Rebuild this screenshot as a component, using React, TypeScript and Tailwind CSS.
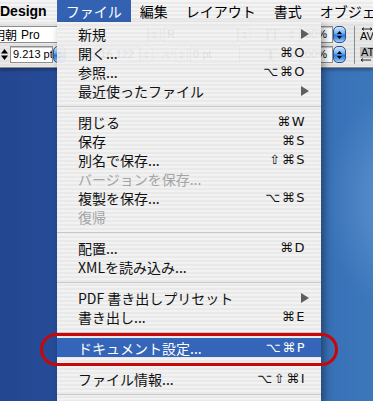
import React from "react";

type Item =
  | "sep"
  | { t: string; k?: string; arrow?: boolean; dis?: boolean; hi?: boolean };

const items: Item[] = [
  { t: "新規", arrow: true },
  { t: "開く...", k: "⌘O" },
  { t: "参照...", k: "⌥⌘O" },
  { t: "最近使ったファイル", arrow: true },
  "sep",
  { t: "閉じる", k: "⌘W" },
  { t: "保存", k: "⌘S" },
  { t: "別名で保存...", k: "⇧⌘S" },
  { t: "バージョンを保存...", dis: true },
  { t: "複製を保存...", k: "⌥⌘S" },
  { t: "復帰", dis: true },
  "sep",
  { t: "配置...", k: "⌘D" },
  { t: "XMLを読み込み..." },
  "sep",
  { t: "PDF 書き出しプリセット", arrow: true },
  { t: "書き出し...", k: "⌘E" },
  "sep",
  { t: "ドキュメント設定...", k: "⌥⌘P", hi: true },
  "sep",
  { t: "ファイル情報...", k: "⌥⇧⌘I" },
  "sep",
];

function UpDown({ color = "#000" }: { color?: string }) {
  return (
    <svg width="7" height="11" viewBox="0 0 7 11" className="shrink-0">
      <path d="M0 4.5 L3.5 0 L7 4.5Z" fill={color} />
      <path d="M0 6.5 L3.5 11 L7 6.5Z" fill={color} />
    </svg>
  );
}

function AquaStepper() {
  return (
    <div className="flex h-[17px] w-[13px] shrink-0 flex-col items-center justify-center gap-[2px] rounded-[5px] border border-[#2c4f8c] bg-[linear-gradient(to_bottom,#d2e8fd_0%,#7ab3f0_40%,#2f77d9_55%,#5d9fe9_80%,#a9d4fa_100%)]">
      <svg width="5" height="3" viewBox="0 0 5 3">
        <path d="M0 3 L2.5 0 L5 3Z" fill="#000" />
      </svg>
      <svg width="5" height="3" viewBox="0 0 5 3">
        <path d="M0 0 L2.5 3 L5 0Z" fill="#000" />
      </svg>
    </div>
  );
}

function GrayStepper() {
  return (
    <div className="flex h-[17px] w-[13px] shrink-0 flex-col items-center justify-center gap-[2px] rounded-[5px] border border-[#9a9a9a] bg-[linear-gradient(to_bottom,#fdfdfd_0%,#e2e2e2_50%,#d0d0d0_55%,#f2f2f2_100%)]">
      <svg width="5" height="3" viewBox="0 0 5 3">
        <path d="M0 3 L2.5 0 L5 3Z" fill="#777" />
      </svg>
      <svg width="5" height="3" viewBox="0 0 5 3">
        <path d="M0 0 L2.5 3 L5 0Z" fill="#777" />
      </svg>
    </div>
  );
}

function Field({ w, children, right }: { w: string; children?: React.ReactNode; right?: boolean }) {
  return (
    <div
      className={`flex h-[17px] shrink-0 items-center overflow-hidden whitespace-nowrap border border-[#8e8e8e] bg-white shadow-[inset_0_1px_1px_rgba(0,0,0,0.25)] font-['Liberation_Sans',sans-serif] text-[11px] leading-none text-black ${w} ${right ? "justify-end pr-[5px]" : "pl-[2px]"}`}
    >
      {children}
    </div>
  );
}

function MenuBar() {
  return (
    <div className="flex h-[22px] items-stretch whitespace-nowrap bg-[repeating-linear-gradient(to_bottom,#f4f4f4_0px,#f4f4f4_2px,#eaeaea_2px,#eaeaea_4px)] text-[14px] leading-none text-black">
      <div className="flex shrink-0 items-center pr-[10px] font-['Liberation_Sans',sans-serif] font-bold">Design</div>
      <div className="flex shrink-0 items-center bg-[#3462b3] px-[9px] text-white">ファイル</div>
      <div className="flex shrink-0 items-center px-[9px]">編集</div>
      <div className="flex shrink-0 items-center px-[9px]">レイアウト</div>
      <div className="flex shrink-0 items-center px-[9px]">書式</div>
      <div className="flex shrink-0 items-center px-[9px]">オブジェクト</div>
    </div>
  );
}

function Toolbar() {
  return (
    <div className="flex h-[46px] flex-col gap-[3px] overflow-hidden whitespace-nowrap border-b border-[#8a8a8a] bg-[repeating-linear-gradient(to_bottom,#e9e9e9_0px,#e9e9e9_2px,#e1e1e1_2px,#e1e1e1_4px)] pt-[4px] shadow-[0_2px_3px_rgba(0,0,0,0.3)]">
      <div className="flex h-[17px] items-center">
        <div className="-ml-[10px] flex h-[17px] w-[158px] shrink-0 items-center border border-[#8e8e8e] bg-white pl-[2px] text-[12px] leading-none text-black">
          <span className="font-['Noto_Sans_CJK_JP',sans-serif]">明朝</span>
          <span className="ml-[4px] font-['Liberation_Sans',sans-serif]">Pro</span>
        </div>
        <GrayStepper />
        <div className="ml-[3px] shrink-0">
          <Field w="w-[74px]">R</Field>
        </div>
        <GrayStepper />
        <div className="ml-[14px] w-[20px] shrink-0 font-['Liberation_Serif',serif] text-[16px] leading-none text-[#555]">IT</div>
        <div className="ml-[3px] shrink-0">
          <UpDown color="#888" />
        </div>
        <div className="ml-[4px] shrink-0">
          <Field w="w-[34px]" right>
            100%
          </Field>
        </div>
        <AquaStepper />
        <div className="ml-[8px] h-[38px] w-px shrink-0 self-start bg-[#8c8c8c]" />
        <div className="ml-[5px] flex shrink-0 flex-col items-center font-['Liberation_Sans',sans-serif] text-[11px] leading-none text-black">
          <svg width="12" height="4" viewBox="0 0 12 4">
            <path d="M1 2 H11 M1 2 L3 0.5 M1 2 L3 3.5 M11 2 L9 0.5 M11 2 L9 3.5" stroke="#000" strokeWidth="0.8" fill="none" />
          </svg>
          <span>AV</span>
        </div>
      </div>
      <div className="flex h-[17px] items-center">
        <div className="ml-[1px] mr-[2px] shrink-0">
          <UpDown />
        </div>
        <Field w="w-[43px]">9.213 pt</Field>
        <AquaStepper />
        <div className="ml-[14px] w-[14px] shrink-0 text-[11px] leading-none text-[#555]">⇕</div>
        <Field w="w-[46px]" right>
          16.122
        </Field>
        <GrayStepper />
        <div className="ml-[8px] w-[14px] shrink-0 font-['Liberation_Serif',serif] text-[13px] leading-none text-[#555]">
          A<sup className="text-[8px]">a</sup>
        </div>
        <GrayStepper />
        <div className="ml-[2px] shrink-0">
          <Field w="w-[50px]">0 pt</Field>
        </div>
        <div className="ml-[25px] w-[20px] shrink-0 font-['Liberation_Serif',serif] text-[17px] font-bold leading-none text-[#555]">T</div>
        <div className="ml-[3px] shrink-0">
          <UpDown color="#888" />
        </div>
        <div className="ml-[4px] shrink-0">
          <Field w="w-[34px]" right>
            100%
          </Field>
        </div>
        <AquaStepper />
        <div className="ml-[14px] flex shrink-0 flex-col items-start font-['Liberation_Sans',sans-serif] text-[11px] leading-none text-black">
          <span className="bg-[#bdbdbd] px-[1px]">AT</span>
          <svg width="12" height="4" viewBox="0 0 12 4">
            <path d="M1 2 H11 M1 2 L3 0.5 M1 2 L3 3.5" stroke="#000" strokeWidth="0.8" fill="none" />
          </svg>
        </div>
      </div>
    </div>
  );
}

function FileMenu() {
  return (
    <div className="absolute left-[57px] top-[22px] h-[379px] w-[264px] bg-[repeating-linear-gradient(to_bottom,rgba(255,255,255,0)_0px,rgba(255,255,255,0)_2px,rgba(0,0,0,0.035)_2px,rgba(0,0,0,0.035)_4px),linear-gradient(to_bottom,rgba(242,242,242,0.93)_0px,rgba(242,242,242,0.93)_46px,#f2f2f2_46px,#f2f2f2_100%)] pt-[2px] shadow-[3px_4px_8px_rgba(0,0,0,0.4)]">
      {items.map((it, i) => {
        if (it === "sep") {
          return (
            <div key={i} className="flex h-[12px] items-center">
              <div className="h-px w-full bg-[#c8c8c8]" />
            </div>
          );
        }
        const cls = it.hi
          ? "bg-[#3465b8] text-white"
          : it.dis
          ? "text-[#a4a4a4]"
          : "text-[#111111]";
        return (
          <div
            key={i}
            className={`flex h-[19px] items-center justify-between pl-[21px] pr-[15px] text-[14px] leading-none ${cls}`}
          >
            <span className="whitespace-nowrap">{it.t}</span>
            {it.k && (
              <span className="whitespace-nowrap font-['DejaVu_Sans',sans-serif] text-[13px] tracking-[1.5px]">{it.k}</span>
            )}
            {it.arrow && (
              <svg width="8" height="10" viewBox="0 0 8 10" className="mr-[-3px]">
                <path d="M0 0 L8 5 L0 10Z" fill="#5e5e5e" />
              </svg>
            )}
          </div>
        );
      })}
    </div>
  );
}

export default function App() {
  return (
    <div className="relative h-[401px] w-[373px] overflow-hidden bg-[radial-gradient(ellipse_70px_110px_at_395px_200px,rgba(120,170,225,0.55),rgba(120,170,225,0)),linear-gradient(90deg,#23468f_0%,#2a519e_25%,#3367b0_70%,#3c77bb_100%)] font-['Noto_Sans_CJK_JP',sans-serif]">
      <MenuBar />
      <Toolbar />
      <FileMenu />
      <div className="absolute left-[40px] top-[333px] h-[33px] w-[298px] rounded-full border-[3px] border-[#c80808]" />
    </div>
  );
}
